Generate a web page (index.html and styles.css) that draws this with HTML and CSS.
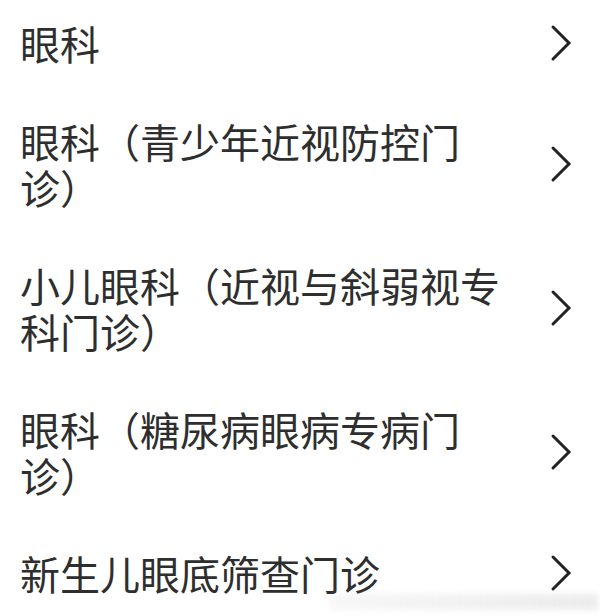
FILE: index.html
```html
<!DOCTYPE html>
<html lang="zh-CN">
  <head>
    <meta charset="UTF-8" />
    <meta name="viewport" content="width=device-width, initial-scale=1.0" />
    <title>科室列表</title>
    <link rel="stylesheet" href="styles.css">
  </head>
  <body>
    <div class="list">
      <div class="item">
        <div class="name">眼科</div>
        <svg class="arrow" viewBox="0 0 22 38"><polyline points="3,3 19,19 3,35" /></svg>
      </div>
      <div class="item">
        <div class="name">眼科（青少年近视防控门诊）</div>
        <svg class="arrow" viewBox="0 0 22 38"><polyline points="3,3 19,19 3,35" /></svg>
      </div>
      <div class="item">
        <div class="name">小儿眼科（近视与斜弱视专科门诊）</div>
        <svg class="arrow" viewBox="0 0 22 38"><polyline points="3,3 19,19 3,35" /></svg>
      </div>
      <div class="item">
        <div class="name">眼科（糖尿病眼病专病门诊）</div>
        <svg class="arrow" viewBox="0 0 22 38"><polyline points="3,3 19,19 3,35" /></svg>
      </div>
      <div class="item">
        <div class="name">新生儿眼底筛查门诊</div>
        <svg class="arrow" viewBox="0 0 22 38"><polyline points="3,3 19,19 3,35" /></svg>
      </div>
    </div>
    <div class="watermark"></div>
  </body>
</html>
```

FILE: styles.css
```css
body {
  margin: 0;
  background: #fff;
  font-family: "Noto Sans CJK SC", "Noto Sans", sans-serif;
  color: #2e2e2e;
  overflow: hidden;
}

.list {
  display: flex;
  flex-direction: column;
}

.item {
  display: flex;
  align-items: center;
  gap: 28px;
  padding: 20px 28px 32px 20px;
}

.name {
  flex: 1;
  font-size: 40px;
  line-height: 46px;
  text-spacing-trim: space-all;
}

.arrow {
  width: 22px;
  height: 38px;
  flex-shrink: 0;
}

.arrow polyline {
  fill: none;
  stroke: #222;
  stroke-width: 3;
  stroke-linecap: round;
  stroke-linejoin: miter;
}

.watermark {
  position: absolute;
  left: 330px;
  top: 594px;
  width: 268px;
  height: 16px;
  background: linear-gradient(90deg, rgba(200, 200, 200, 0.15), rgba(200, 200, 200, 0.35));
  filter: blur(3px);
}
```
